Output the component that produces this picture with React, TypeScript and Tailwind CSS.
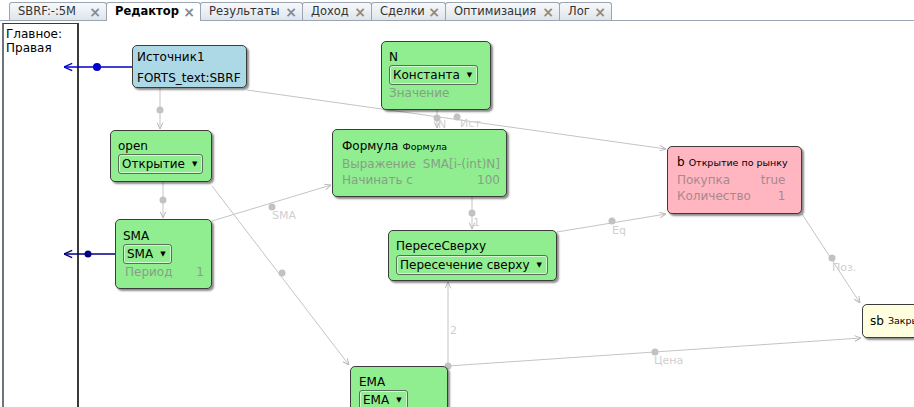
import type { ReactNode } from 'react'

const tabs = [
  { title: 'SBRF:-:5M', active: false, w: 'w-[98px]' },
  { title: 'Редактор', active: true, w: 'w-[95px]' },
  { title: 'Результаты', active: false, w: 'w-[103px]' },
  { title: 'Доход', active: false, w: 'w-[70px]' },
  { title: 'Сделки', active: false, w: 'w-[75px]' },
  { title: 'Оптимизация', active: false, w: 'w-[115px]' },
  { title: 'Лог', active: false, w: 'w-[53px]' },
]

// серые связи между блоками: [x1, y1, x2, y2], точка, подпись
const edges: { p: [number, number, number, number]; dot: [number, number]; label?: string; lx?: number; ly?: number }[] = [
  { p: [160, 88, 160, 129], dot: [160, 110] },
  { p: [247, 90, 666, 149], dot: [457, 117], label: 'Ист', lx: 460, ly: 127 },
  { p: [437, 110, 437, 128], dot: [437, 118], label: 'N', lx: 438, ly: 128 },
  { p: [163, 182, 163, 218], dot: [163, 200] },
  { p: [212, 186, 349, 365], dot: [282, 273] },
  { p: [212, 221, 331, 185], dot: [272, 207], label: 'SMA', lx: 272, ly: 219 },
  { p: [472, 197, 472, 229], dot: [472, 213], label: '1', lx: 473, ly: 226 },
  { p: [557, 232, 666, 214], dot: [612, 221], label: 'Eq', lx: 612, ly: 234 },
  { p: [448, 366, 448, 282], dot: [448, 366], label: '2', lx: 450, ly: 334 },
  { p: [448, 366, 861, 338], dot: [655, 352], label: 'Цена', lx: 654, ly: 364 },
  { p: [802, 214, 860, 303], dot: [832, 258], label: 'Поз.', lx: 832, ly: 271 },
]

function Tab({ title, active, w }: { title: string; active: boolean; w: string }) {
  return (
    <div
      className={`flex items-center justify-between ${w} pl-[8px] pr-[5px] -mr-px border border-b-0 border-[#9aa5b1] rounded-t-[3px] text-[11.5px] leading-none ${
        active
          ? 'bg-white font-bold text-black h-[19px] relative z-10 -mb-px'
          : 'h-[18px] bg-gradient-to-b from-[#f7f9fb] to-[#dfe5ec] text-[#333]'
      }`}
    >
      <span>{title}</span>
      <span className="text-[#8a8a8a] font-bold text-[14px]">×</span>
    </div>
  )
}

function Node({
  x, y, w, h, bg, children, cls = '',
}: { x: number; y: number; w: number; h: number; bg: string; children: ReactNode; cls?: string }) {
  return (
    <div
      className={`absolute border border-[#3c3c3c] rounded-[5px] shadow-[2px_2px_2px_rgba(0,0,0,0.45)] text-[12px] text-black whitespace-nowrap ${bg} ${cls}`}
      style={{ left: x, top: y, width: w, height: h }}
    >
      {children}
    </div>
  )
}

function Select({ text }: { text: string }) {
  return (
    <div className="inline-flex items-center h-[20px] pl-[3px] pr-[5px] gap-[7px] border border-[#5c6f5c] rounded-[3px] shadow-[inset_0_0_0_1px_rgba(255,255,255,0.6)]">
      <span className="leading-none">{text}</span>
      <span className="text-[7px] leading-none">▼</span>
    </div>
  )
}

export default function App() {
  return (
    <div className="relative w-[914px] h-[407px] overflow-hidden bg-white font-['DejaVu_Sans',sans-serif]">
      {/* вкладки */}
      <div className="flex items-end h-[21px] pl-[9px] border-b border-[#9aa5b1]">
        {tabs.map((t) => (
          <Tab key={t.title} title={t.title} active={t.active} w={t.w} />
        ))}
      </div>

      {/* левая панель */}
      <div className="flex h-[386px]">
        <div className="ml-[2px] mt-[2px] w-[77px] border-l-2 border-r-2 border-t border-l-[#6d737a] border-r-[#3a3a3a] border-t-[#3a3a3a] text-[12px] leading-[14px] pl-[2px] pt-[3px] text-black">
          Главное:
          <br />
          Правая
        </div>
      </div>

      {/* холст */}
      <svg className="absolute left-0 top-0" width={914} height={407}>
        <defs>
          <marker id="ga" viewBox="0 0 10 10" refX="10" refY="5" markerWidth="7" markerHeight="7" orient="auto">
            <path d="M1 1 L10 5 L1 9" fill="none" stroke="#b8b8b8" strokeWidth="1.4" />
          </marker>
          <marker id="ba" viewBox="0 0 10 10" refX="10" refY="5" markerWidth="7" markerHeight="7" orient="auto">
            <path d="M1 1 L10 5 L1 9" fill="none" stroke="#0000cc" strokeWidth="1.4" />
          </marker>
          <marker id="na" viewBox="0 0 10 10" refX="10" refY="5" markerWidth="7" markerHeight="7" orient="auto">
            <path d="M1 1 L10 5 L1 9" fill="none" stroke="#000080" strokeWidth="1.4" />
          </marker>
        </defs>
        {edges.map((e, i) => (
          <g key={i}>
            <line x1={e.p[0]} y1={e.p[1]} x2={e.p[2]} y2={e.p[3]} stroke="#c4c4c4" strokeWidth="1" markerEnd="url(#ga)" />
            <circle cx={e.dot[0]} cy={e.dot[1]} r="3.5" fill="#c2c2c2" />
            {e.label && (
              <text x={e.lx} y={e.ly} fontSize="11" fill="#cfcfcf" fontFamily="DejaVu Sans, sans-serif">
                {e.label}
              </text>
            )}
          </g>
        ))}
        <line x1={132} y1={67} x2={64} y2={67} stroke="#0000cc" strokeWidth="1.3" markerEnd="url(#ba)" />
        <circle cx={97} cy={67} r="4" fill="#0000cc" />
        <line x1={115} y1={254} x2={64} y2={254} stroke="#000080" strokeWidth="1.3" markerEnd="url(#na)" />
        <circle cx={88} cy={254} r="3.5" fill="#000080" />
      </svg>

      <Node x={132} y={45} w={115} h={43} bg="bg-[#add8e6]" cls="pl-[4px] pt-[1px] leading-[21px]">
        <div>Источник1</div>
        <div>FORTS_text:SBRF</div>
      </Node>

      <Node x={381} y={41} w={110} h={69} bg="bg-[#90ee90]" cls="pl-[7px] pt-[8px]">
        <div className="leading-[14px] h-[15px]">N</div>
        <Select text="Константа" />
        <div className="leading-[16px] text-[#86a086]">Значение</div>
      </Node>

      <Node x={110} y={130} w={102} h={52} bg="bg-[#90ee90]" cls="pl-[7px] pt-[8px]">
        <div className="leading-[14px] h-[15px]">open</div>
        <Select text="Открытие" />
      </Node>

      <Node x={332} y={129} w={175} h={68} bg="bg-[#90ee90]" cls="pl-[9px] pt-[8px] pr-[6px] leading-[16.5px]">
        <div className="flex items-baseline gap-[4px]">
          <span>Формула</span>
          <span className="text-[9.5px]">Формула</span>
        </div>
        <div className="grid grid-cols-[auto_auto] justify-between text-[#86a086]">
          <span>Выражение</span>
          <span className="text-right">SMA[i-(int)N]</span>
          <span>Начинать с</span>
          <span className="text-right">100</span>
        </div>
      </Node>

      <Node x={667} y={146} w={135} h={68} bg="bg-[#ffb6c1]" cls="pl-[9px] pt-[7px] leading-[16.5px]">
        <div className="flex items-baseline gap-[4px]">
          <span>b</span>
          <span className="text-[9.5px]">Открытие по рынку</span>
        </div>
        <div className="inline-grid grid-cols-[auto_auto] gap-x-[10px] text-[#a8878e]">
          <span>Покупка</span>
          <span className="text-right">true</span>
          <span>Количество</span>
          <span className="text-right">1</span>
        </div>
      </Node>

      <Node x={115} y={219} w={97} h={70} bg="bg-[#90ee90]" cls="pl-[7px] pt-[9px] pr-[7px]">
        <div className="leading-[14px] h-[15px]">SMA</div>
        <Select text="SMA" />
        <div className="flex justify-between leading-[16px] text-[#86a086]">
          <span className="pl-[2px]">Период</span>
          <span>1</span>
        </div>
      </Node>

      <Node x={388} y={230} w={169} h={51} bg="bg-[#90ee90]" cls="pl-[7px] pt-[7px]">
        <div className="leading-[16px] h-[17px]">ПересеСверху</div>
        <Select text="Пересечение сверху" />
      </Node>

      <Node x={350} y={366} w={98} h={60} bg="bg-[#90ee90]" cls="pl-[8px] pt-[8px]">
        <div className="leading-[14px] h-[15px]">EMA</div>
        <Select text="EMA" />
      </Node>

      <Node x={862} y={304} w={130} h={34} bg="bg-[#ffffe0]" cls="pl-[7px] flex items-center gap-[4px]">
        <span>sb</span>
        <span className="text-[9.5px]">Закрытие по рынку</span>
      </Node>
    </div>
  )
}
